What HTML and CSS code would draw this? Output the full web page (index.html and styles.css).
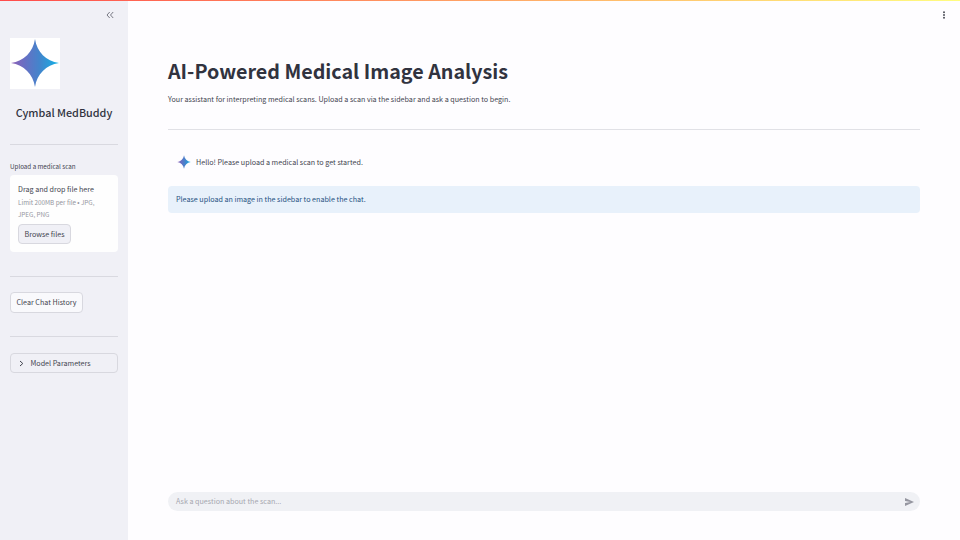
FILE: index.html
```html
<!DOCTYPE html>
<html lang="en">
<head>
<meta charset="utf-8">
<title>Cymbal MedBuddy</title>
<link rel="stylesheet" href="styles.css">
</head>
<body>
<svg class="defs" width="0" height="0" aria-hidden="true">
  <defs>
    <linearGradient id="spark-fill" x1="0" y1="0.5" x2="1" y2="0.5">
      <stop offset="0" stop-color="#8f60b6"/>
      <stop offset="0.3" stop-color="#6670c4"/>
      <stop offset="0.6" stop-color="#4285cc"/>
      <stop offset="1" stop-color="#12b2e6"/>
    </linearGradient>
    <symbol id="spark" viewBox="0 0 50 50">
      <path fill="url(#spark-fill)" d="M25 1C27 14 36 23 49 25C36 27 27 36 25 49C23 36 14 27 1 25C14 23 23 14 25 1Z"/>
    </symbol>
  </defs>
</svg>
<div class="decoration"></div>
<div class="app">
  <aside class="sidebar">
    <div class="collapse">
      <svg width="8" height="8" viewBox="0 0 8 8"><path d="M3.7 1L1 4L3.7 7M7.2 1L4.5 4L7.2 7"/></svg>
    </div>
    <div class="logo"><svg width="50" height="50"><use href="#spark"/></svg></div>
    <h2 class="brand"><span>Cymbal MedBuddy</span></h2>
    <hr class="rule">
    <div class="label"><span>Upload a medical scan</span></div>
    <div class="dropzone">
      <div class="drop-title"><span>Drag and drop file here</span></div>
      <div class="drop-hint">Limit 200MB per file <span class="bullet">•</span> JPG,<br>JPEG, PNG</div>
      <button class="button browse"><span>Browse files</span></button>
    </div>
    <hr class="rule rule-upload">
    <button class="button clear"><span>Clear Chat History</span></button>
    <hr class="rule rule-clear">
    <div class="expander">
      <svg width="5" height="7" viewBox="0 0 5 7"><path d="M1 1L3.8 3.5L1 6"/></svg>
      <span>Model Parameters</span>
    </div>
  </aside>
  <main class="main">
    <header class="toolbar">
      <svg width="4" height="8" viewBox="0 0 4 8"><circle cx="2" cy="1.2" r="1"/><circle cx="2" cy="4" r="1"/><circle cx="2" cy="6.8" r="1"/></svg>
    </header>
    <h1 class="title"><span>AI-Powered Medical Image Analysis</span></h1>
    <p class="subtitle"><span>Your assistant for interpreting medical scans. Upload a scan via the sidebar and ask a question to begin.</span></p>
    <hr class="rule rule-main">
    <div class="message">
      <svg width="14" height="14"><use href="#spark"/></svg>
      <span>Hello! Please upload a medical scan to get started.</span>
    </div>
    <div class="info"><span>Please upload an image in the sidebar to enable the chat.</span></div>
    <div class="chat">
      <span>Ask a question about the scan...</span>
      <svg width="9" height="8" viewBox="0 0 9 8"><path d="M0 0L9 4L0 8V5L5.4 4L0 3Z"/></svg>
    </div>
  </main>
</div>
</body>
</html>
```

FILE: styles.css
```css
* { box-sizing: border-box; }
body {
  margin: 0;
  height: 540px;
  overflow: hidden;
  background: #fefdff;
  color: #42444f;
  font-family: "Noto Sans CJK SC", "Noto Sans", sans-serif;
  font-size: 7.17px;
  line-height: 12px;
}
.defs { position: absolute; }
.decoration {
  position: absolute;
  inset: 0 0 auto 0;
  height: 1px;
  background: linear-gradient(90deg, #ff4b4b, #fffd80);
}
.app { display: flex; height: 540px; }
.sidebar {
  width: 128px;
  padding: 11px 10px 0;
  display: flex;
  flex-direction: column;
  align-items: flex-start;
  background: #f0f0f6;
}
.collapse { align-self: flex-end; height: 8px; margin-right: 4px; display: flex; }
.collapse path, .expander path { fill: none; stroke: #777883; stroke-width: 1; }
.logo { width: 50px; height: 51px; margin-top: 19px; background: #fff; display: flex; }
.brand {
  align-self: stretch;
  margin: 14px -2px 1px;
  text-align: center;
  white-space: nowrap;
  font-size: 10.8px;
  line-height: 18px;
  font-weight: 500;
  color: #31333f;
}
.rule { align-self: stretch; width: auto; height: 1px; margin: 22px 0 0; border: 0; background: #d9d9e0; }
.label { margin-top: 16px; font-size: 6.25px; white-space: nowrap; }
.dropzone {
  align-self: stretch;
  height: 77px;
  margin-top: 2px;
  padding: 8px 8px 7px;
  border-radius: 4px;
  background: #fefefe;
  white-space: nowrap;
}
.drop-hint {
  height: 23px;
  margin-top: 2px;
  font-size: 6.3px;
  line-height: 11.5px;
  color: #9596a0;
}
.bullet { font-family: "Liberation Sans", sans-serif; line-height: 1; }
.button {
  display: flex;
  align-items: center;
  justify-content: center;
  padding: 0;
  border: 1px solid #d8d8df;
  border-radius: 4px;
  font: inherit;
  color: inherit;
  white-space: nowrap;
}
.browse { width: 53px; height: 20px; margin-top: 4px; background: #f0f0f6; }
.rule-upload { margin-top: 24px; }
.clear { width: 73px; height: 21px; margin-top: 15px; padding-bottom: 1px; background: #f9f9fc; }
.rule-clear { margin-top: 23px; }
.expander {
  align-self: stretch;
  height: 20px;
  margin-top: 16px;
  padding-left: 8px;
  display: flex;
  align-items: center;
  gap: 6.5px;
  border: 1px solid #d8d8df;
  border-radius: 4px;
}
.expander path { stroke: #42444f; }
.main { flex: 1; padding: 0 40px 29px; display: flex; flex-direction: column; }
.toolbar { height: 30px; margin-right: -26px; display: flex; align-items: center; justify-content: flex-end; fill: #50525c; }
.title {
  margin: 25px 0 0;
  font-size: 19.7px;
  line-height: 32px;
  font-weight: 700;
  color: #31333f;
  white-space: nowrap;
}
.subtitle { margin: 6px 0 0; }
.rule-main { margin-top: 24px; background: #e1e1e6; }
.message { height: 14px; margin-top: 25px; padding-left: 9px; display: flex; align-items: center; gap: 5px; }
.message span { padding-bottom: 1px; }
.info {
  height: 27px;
  margin-top: 17px;
  padding: 0 8px 1px;
  display: flex;
  align-items: center;
  border-radius: 4px;
  background: #e8f1fb;
  color: #24507f;
}
.chat {
  height: 19px;
  margin-top: auto;
  padding: 0 6px 0 8px;
  display: flex;
  align-items: center;
  justify-content: space-between;
  border-radius: 10px;
  background: #f0f1f5;
  color: #a6a7b0;
  fill: #9596a0;
}
.chat span { padding-bottom: 1px; }
```
